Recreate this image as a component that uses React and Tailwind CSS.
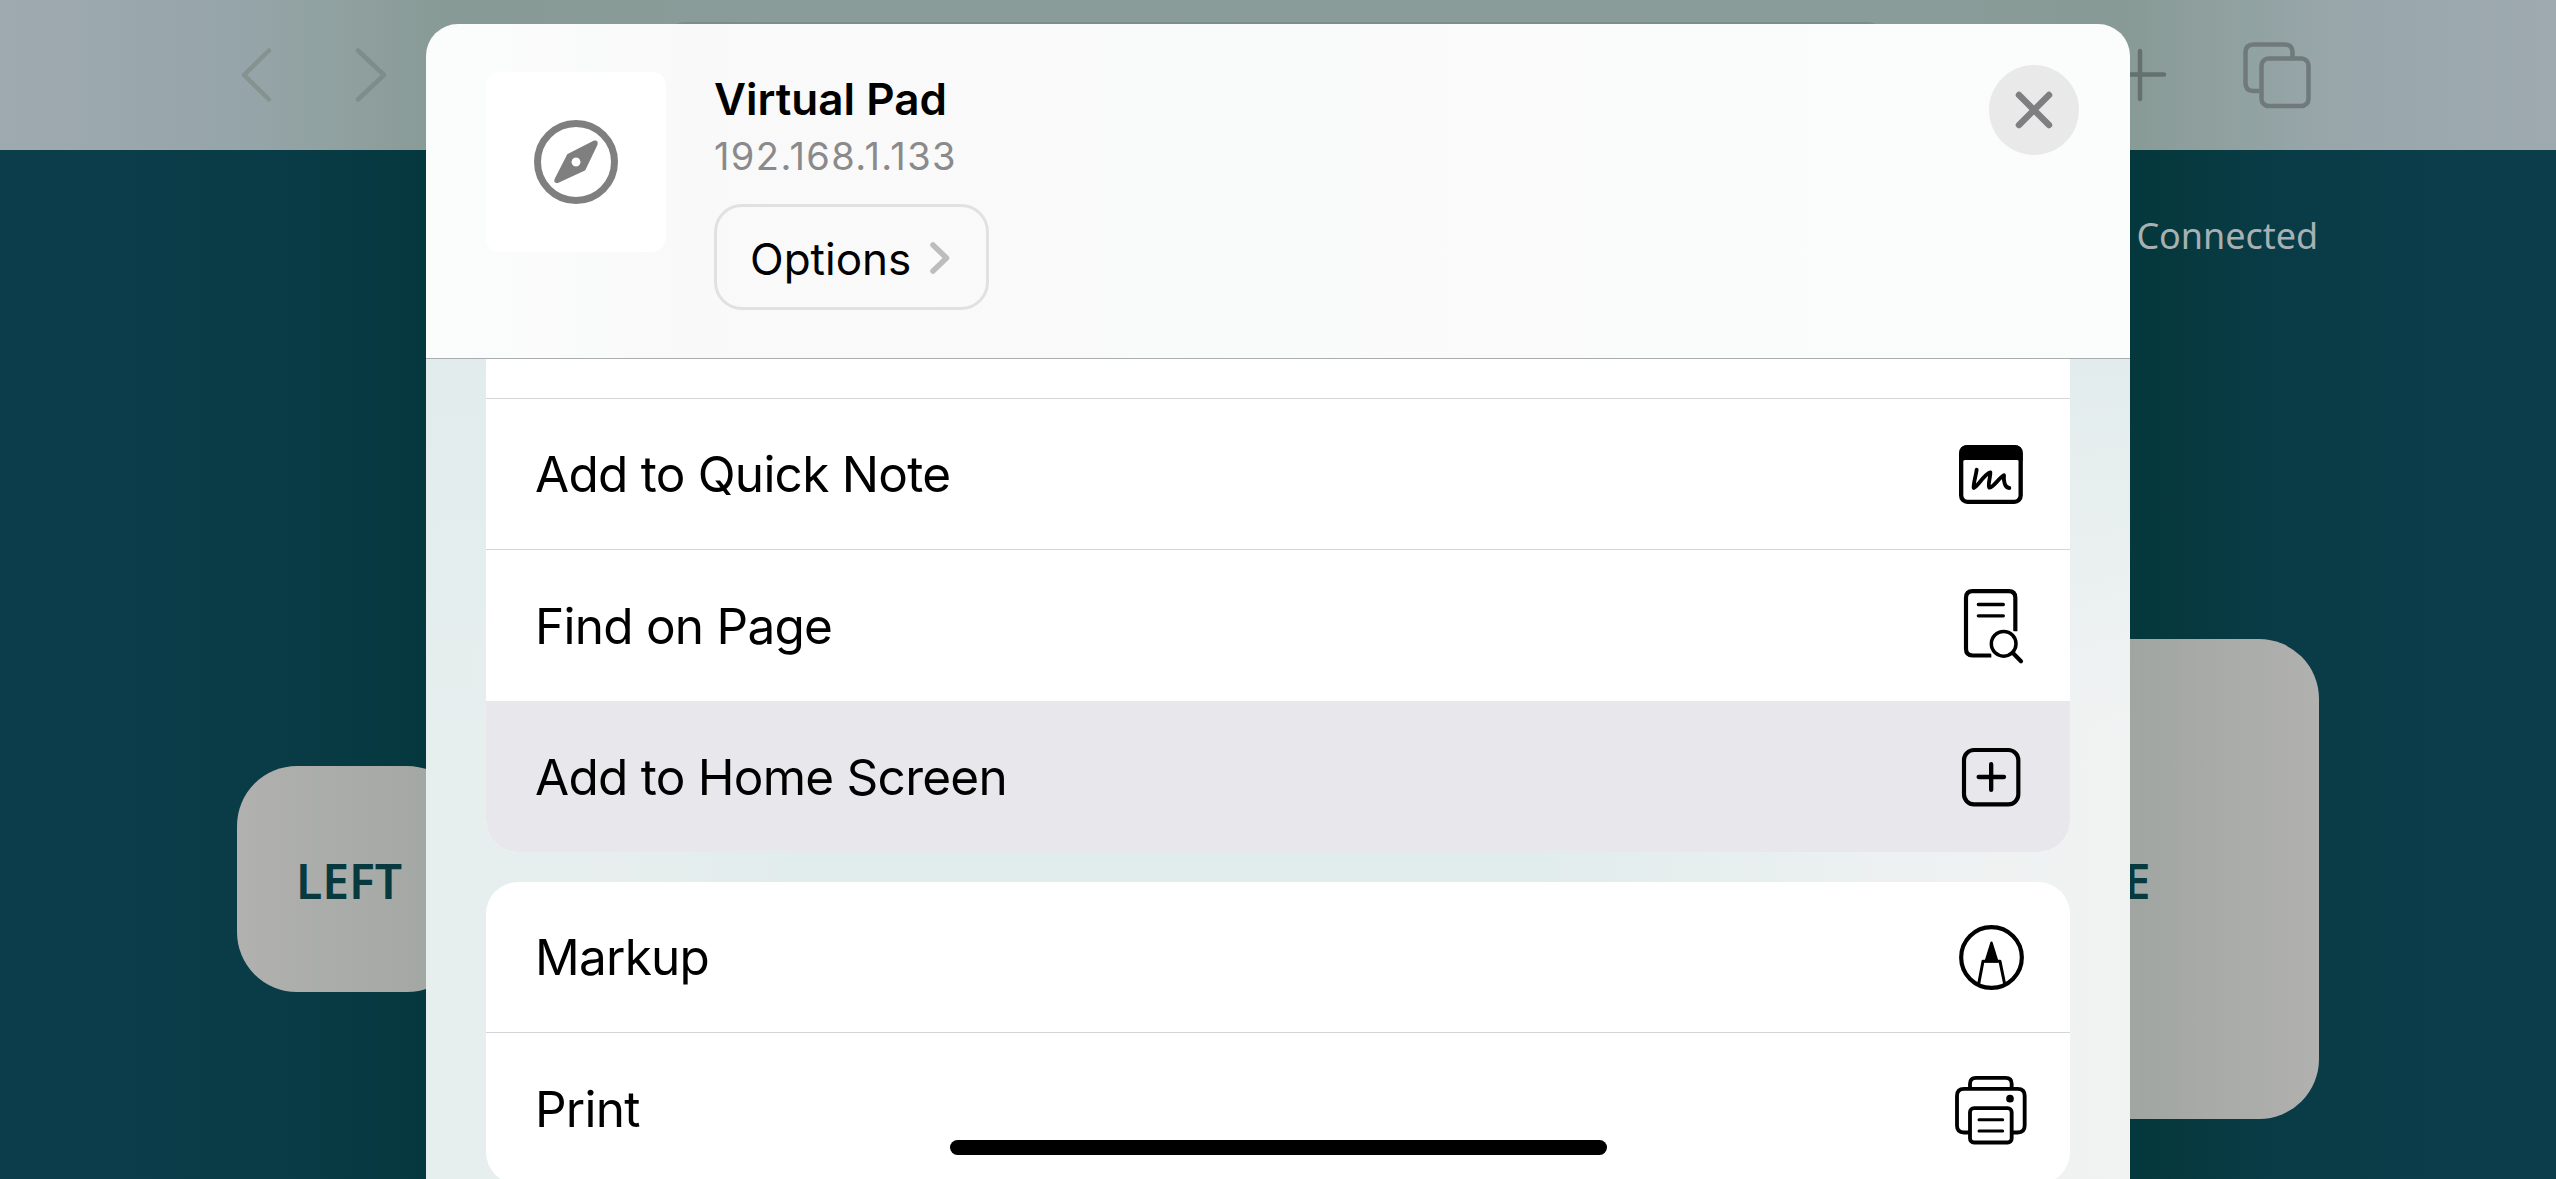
const UI = "font-[Inter,'Liberation_Sans',sans-serif]";

function QuickNoteIcon() {
  return (
    <svg viewBox="105 42 216 240" className="h-20 w-[72px] shrink-0">
      <rect x="123.500" y="81.500" width="178.500" height="164" rx="19" fill="none" stroke="#000" strokeWidth="13" />
      <path d="M118 122V99q0-23 23-23H285q23 0 23 23V122H297q-2-2-6-2H136q-4 0-6 2Z" />
      <path d="M170 149C168 168 160 188 161 204C170 204 192 162 211 157C212 172 202 194 208 203C220 203 236 174 252 166C250 182 254 203 268 204" fill="none" stroke="#000" strokeWidth="11.500" strokeLinecap="round" strokeLinejoin="round" />
    </svg>
  );
}

function FindIcon() {
  return (
    <svg viewBox="105 496.5 216 240" className="h-20 w-[72px] shrink-0" fill="none" stroke="#000" strokeLinecap="round">
      <path d="M286 632V532q0-20-20-20H158q-20 0-20 20V685q0 20 20 20H214" strokeWidth="12.500" strokeLinecap="butt" />
      <path d="M175 552H250M175 586H250" strokeWidth="10" />
      <circle cx="251" cy="670" r="48" fill="#fff" stroke="none" />
      <circle cx="251" cy="670" r="37" strokeWidth="10.500" />
      <path d="M278 697L303 722" strokeWidth="12.500" />
    </svg>
  );
}

function AddIcon() {
  return (
    <svg viewBox="105 110.5 216 240" className="h-20 w-[72px] shrink-0" fill="none" stroke="#000" strokeLinecap="round">
      <rect x="132" y="149.500" width="163" height="163" rx="30" strokeWidth="12.500" />
      <path d="M176 230.500H252M213.500 192V269" strokeWidth="13" />
    </svg>
  );
}

function MarkupIcon() {
  return (
    <svg viewBox="105 651 216 240" className="h-20 w-[72px] shrink-0" fill="none" stroke="#000" strokeLinejoin="round">
      <circle cx="214.500" cy="772.500" r="91" strokeWidth="12.500" />
      <path d="M176 852L189 784H240L254 852" strokeWidth="9" />
      <path d="M214.500 728L197 784H232Z" fill="#000" strokeWidth="7" />
    </svg>
  );
}

function PrintIcon() {
  return (
    <svg viewBox="105 1105.5 216 240" className="h-20 w-[72px] shrink-0" fill="none" stroke="#000">
      <path d="M150 1162V1150q0-18 18-18H257q18 0 18 18V1162" strokeWidth="11.500" />
      <path d="M148 1296H132q-21 0-21-21V1186q0-21 21-21H293q21 0 21 21V1275q0 21-21 21H278" strokeWidth="11.500" />
      <rect x="150" y="1223" width="125" height="103" rx="12" strokeWidth="11.500" />
      <path d="M177 1257.500H248M177 1291.500H248" strokeWidth="9" strokeLinecap="round" />
      <circle cx="270" cy="1194.500" r="11.500" fill="#000" stroke="none" />
    </svg>
  );
}

function Row({ label, icon, className }) {
  return (
    <div className={"flex shrink-0 items-center justify-between pr-[43px] pl-[49px] " + className}>
      <span className="whitespace-nowrap pt-0.5 text-[49.5px] leading-none font-normal tracking-[-0.75px]">{label}</span>
      {icon}
    </div>
  );
}

function Backdrop() {
  return (
    <div className="flex h-full flex-col">
      <div className="flex h-[150px] shrink-0 items-start bg-[linear-gradient(90deg,#9faab0_0%,#96a5aa_9%,#91a2a2_12.5%,#889a95_17.5%,#8a9c99_30%,#8a9c99_75%,#889a95_83%,#91a2a2_88%,#98a6aa_91%,#9eaab0_100%)] pr-[243px] pl-[239px]">
        <div className="flex gap-[77px] pt-[46px]">
          <svg viewBox="0 0 36 58" className="h-[58px] w-9" fill="none" stroke="#84938f" strokeWidth="4.500" strokeLinecap="round" strokeLinejoin="round">
            <path d="M30 4.500L5 29L30 53.500" />
          </svg>
          <svg viewBox="0 0 36 58" className="h-[58px] w-9" fill="none" stroke="#7d8d89" strokeWidth="4.500" strokeLinecap="round" strokeLinejoin="round">
            <path d="M6 4.500L32 29L6 53.500" />
          </svg>
        </div>
        <div className="mt-[22px] ml-[270px] h-[106px] w-[1236px] rounded-[28px] bg-[#7d8d89]" />
        <div className="ml-auto flex gap-[73px] pt-10">
          <svg viewBox="0 0 56 70" className="h-[70px] w-14" fill="none" stroke="#64716f" strokeWidth="4.500" strokeLinecap="round">
            <path d="M28 11V59M4 34.500H52" />
          </svg>
          <svg viewBox="0 0 72 70" className="h-[70px] w-[72px]" fill="none" stroke="#70797b" strokeWidth="4.500">
            <path d="M51.500 18V12.500q0-8-8-8H12.500q-8 0-8 8V43q0 8 8 8H18.500" />
            <rect x="20.500" y="18.500" width="47" height="47.500" rx="7" />
          </svg>
        </div>
      </div>
      <div className="flex grow flex-col justify-between bg-[linear-gradient(90deg,#0c3d4b_0%,#0a3c48_10%,#05383e_16.500%,#05383c_50%,#05383c_84%,#0a3c48_90%,#0c3d4b_100%)] px-[237px] pt-[62px] pb-[60px] font-['Noto_Sans','Open_Sans',sans-serif]">
        <div className="pr-px text-right text-[36px] leading-[48px] tracking-[-0.05px] text-[#a7b1b3]">Connected</div>
        <div className="flex items-center justify-between text-[48px] font-semibold text-[#07393f]">
          <div className="flex h-[226px] w-[230px] items-center justify-center rounded-[60px] bg-linear-to-r from-[#b1b1af] to-[#a1a6a2] pt-1 pr-1.5">LEFT</div>
          <div className="flex h-[480px] w-[456px] items-center justify-center rounded-[60px] bg-linear-to-r from-[#9da39f] from-50% to-[#b1b1af] pt-1 pl-[18px]">FIRE</div>
        </div>
      </div>
    </div>
  );
}

export default function App() {
  return (
    <div className="relative h-[1179px] w-[2556px] overflow-hidden">
      <Backdrop />
      <div className={"absolute top-6 left-[426px] flex h-[1155px] w-[1704px] flex-col overflow-hidden rounded-t-[32px] text-black " + UI}>
        <header className="flex h-[335px] shrink-0 items-start border-b border-[#a9adae] bg-linear-to-r from-[#fbfdfc] via-[#f9f9f9] via-15% to-[#fbfcfc] pt-12 pr-[51px] pl-[60px]">
          <div className="flex size-[180px] items-center justify-center rounded-[14px] bg-white">
            <svg viewBox="0 0 84 84" className="size-[84px]">
              <circle cx="42" cy="42" r="38.500" fill="none" stroke="#7f7f7f" strokeWidth="7" />
              <path fillRule="evenodd" fill="#7f7f7f" stroke="#7f7f7f" strokeWidth="2" strokeLinejoin="round" d="M34 35L60.500 21.500Q63.500 21 62.500 24.500L50.500 49.500L23.500 62Q20.500 62.500 21.500 59.500ZM42 36.500a5.500 5.500 0 1 0 0.010 0Z" />
            </svg>
          </div>
          <div className="ml-12 flex flex-col items-start">
            <h1 className="mt-0.5 text-[44px] leading-[50px] font-semibold">Virtual Pad</h1>
            <p className="mt-[10px] text-[38px] leading-[44px] tracking-[1.4px] text-[#8a8a8c]">192.168.1.133</p>
            <button className="mt-[26px] flex h-[106px] w-[275px] items-center gap-[18px] rounded-[28px] border-[3px] border-[#e1e1e1] pl-[33px]">
              <span className="pt-[3px] text-[44px]">Options</span>
              <svg viewBox="0 0 22 36" className="mt-0.5 h-9 w-[22px]" fill="none" stroke="#bdbdbf" strokeWidth="5.500" strokeLinecap="round" strokeLinejoin="round">
                <path d="M4 5L17.500 18L4 31" />
              </svg>
            </button>
          </div>
          <button className="-mt-[7px] ml-auto flex size-[90px] items-center justify-center rounded-full bg-[#e9e9e9]">
            <svg viewBox="0 0 38 38" className="size-[38px]" fill="none" stroke="#7f7f81" strokeWidth="6.500" strokeLinecap="round">
              <path d="M4 4L34 34M34 4L4 34" />
            </svg>
          </button>
        </header>
        <div className="flex grow flex-col gap-[30px] bg-[linear-gradient(180deg,#e2ecec_0%,#e2ecec00_45%),linear-gradient(90deg,#e6eeee_0%,#e8eeee_10%,#e1ecec_22%,#e1ecec_65%,#eef1f1_88%,#f1f3f3_100%)] px-[60px]">
          <div className="flex shrink-0 flex-col overflow-hidden rounded-b-[32px] bg-white">
            <div className="h-10 border-b border-[#d3d5d6]" />
            <Row label="Add to Quick Note" icon={<QuickNoteIcon />} className="h-[151px] border-b border-[#d3d5d6]" />
            <Row label="Find on Page" icon={<FindIcon />} className="h-[151px]" />
            <Row label="Add to Home Screen" icon={<AddIcon />} className="h-[151px] bg-[#e8e8ec]" />
          </div>
          <div className="flex shrink-0 flex-col overflow-hidden rounded-[32px] bg-white">
            <Row label="Markup" icon={<MarkupIcon />} className="h-[151px] border-b border-[#d3d5d6]" />
            <Row label="Print" icon={<PrintIcon />} className="h-[151px]" />
          </div>
        </div>
      </div>
      <div className="absolute top-[1140px] left-[950px] h-[15px] w-[657px] rounded-full bg-black" />
    </div>
  );
}
